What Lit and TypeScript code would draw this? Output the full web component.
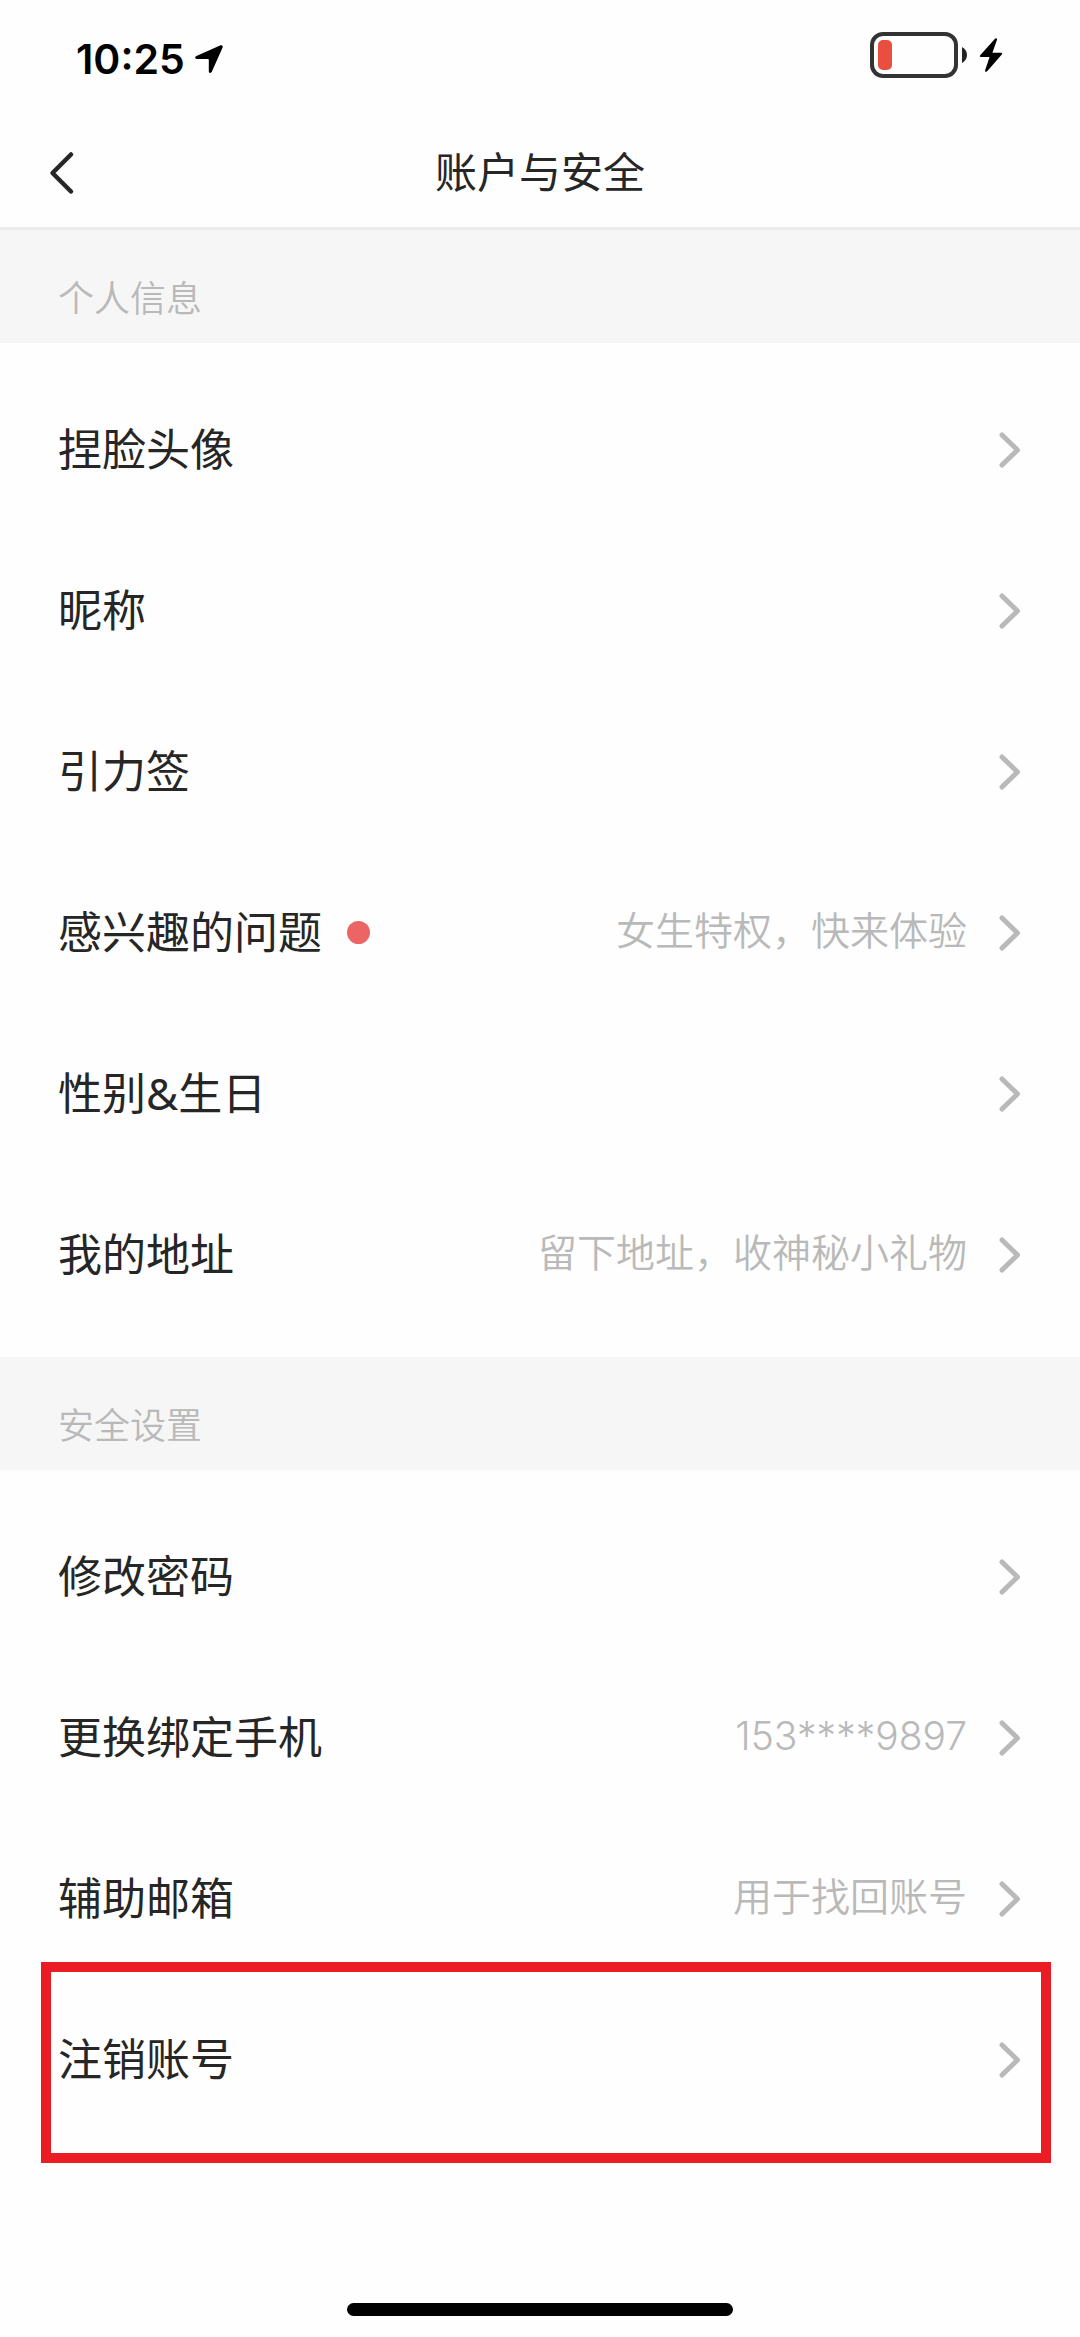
import { LitElement, html, css, nothing } from "lit";
import { customElement, property } from "lit/decorators.js";

interface Item {
  label: string;
  detail?: string;
  dot?: boolean;
  marked?: boolean;
}

interface Section {
  title: string;
  items: Item[];
}

const sections: Section[] = [
  {
    title: "个人信息",
    items: [
      { label: "捏脸头像" },
      { label: "昵称" },
      { label: "引力签" },
      { label: "感兴趣的问题", detail: "女生特权，快来体验", dot: true },
      { label: "性别&生日" },
      { label: "我的地址", detail: "留下地址，收神秘小礼物" },
    ],
  },
  {
    title: "安全设置",
    items: [
      { label: "修改密码" },
      { label: "更换绑定手机", detail: "153****9897" },
      { label: "辅助邮箱", detail: "用于找回账号" },
      { label: "注销账号", marked: true },
    ],
  },
];

@customElement("status-bar")
export class StatusBar extends LitElement {
  static styles = css`
    :host {
      display: flex;
      align-items: center;
      justify-content: space-between;
      height: 117px;
      padding: 0 76px;
      box-sizing: border-box;
      color: #000;
    }
    .clock {
      display: flex;
      align-items: center;
      gap: 10px;
      font-size: 41px;
      font-weight: 600;
      line-height: 48px;
    }
    .power {
      display: flex;
      align-items: center;
      padding-bottom: 8px;
    }
    svg {
      display: block;
    }
  `;

  render() {
    return html`
      <div class="clock">
        <span>10:25</span>
        <svg width="28" height="28" viewBox="0 0 28 28" aria-hidden="true">
          <path
            d="M25.6 .3 1.4 10.9C-.4 11.7-.2 14 1.8 14H13c.5 0 .8.3.8.8v11.4c0 2 2.2 2.4 3 .6L27.6 2.6C28.2 1.1 27 -.2 25.6.3Z"
          />
        </svg>
      </div>
      <div class="power">
        <svg width="134" height="46" viewBox="0 0 134 46" aria-hidden="true">
          <rect x="2" y="2" width="84" height="42" rx="11" fill="none" stroke="#333" stroke-width="4" />
          <rect x="8" y="8" width="14" height="30" rx="5" fill="#e94e40" />
          <path d="M92 15c3 1.500 5 4.500 5 8s-2 6.500-5 8Z" fill="#222" />
          <path
            d="M125 6.800 110.200 23.300c-.7.900-.3 1.700.8 1.700h8.600l-4.500 13.200c-.4 1.500 1.100 2.100 2.100 1.100L131.800 22.400c.8-.9.300-1.700-.8-1.700h-8.600l4.600-13c.3-1.400-1.100-2-2-.9Z"
          />
        </svg>
      </div>
    `;
  }
}

@customElement("setting-row")
export class SettingRow extends LitElement {
  @property({ attribute: false }) item!: Item;

  static styles = css`
    :host {
      display: block;
      position: relative;
    }
    .row {
      display: flex;
      align-items: center;
      width: 100%;
      height: 161px;
      padding: 0 58px;
      border: 0;
      background: none;
      font: inherit;
      color: #262626;
      text-align: left;
      box-sizing: border-box;
      cursor: pointer;
    }
    .label {
      padding-bottom: 2px;
      font-family: "Noto Sans", "Noto Sans CJK SC", sans-serif;
      font-size: 44px;
      font-weight: 400;
      line-height: 60px;
    }
    .dot {
      width: 23px;
      height: 23px;
      margin-left: 25px;
      border-radius: 50%;
      background: #ec6564;
    }
    .detail {
      margin-left: auto;
      padding-bottom: 4px;
      font-size: 39px;
      font-weight: 350;
      line-height: 60px;
      color: #b9b9b9;
    }
    .arrow {
      display: block;
      flex: none;
      margin-left: auto;
    }
    .detail + .arrow {
      margin-left: 31px;
    }
    .mark {
      position: absolute;
      inset: -17px 29px -23px 41px;
      border: 10px solid #ec1c24;
      pointer-events: none;
    }
  `;

  render() {
    const { label, detail, dot, marked } = this.item;
    return html`
      <button class="row" type="button">
        <span class="label">${label}</span>
        ${dot ? html`<span class="dot"></span>` : nothing}
        ${detail ? html`<span class="detail">${detail}</span>` : nothing}
        <svg class="arrow" width="24" height="36" viewBox="0 0 24 36" aria-hidden="true">
          <path
            d="M4 3 19.500 18 4 33"
            fill="none"
            stroke="#b9b9b9"
            stroke-width="5"
            stroke-linecap="round"
            stroke-linejoin="round"
          />
        </svg>
      </button>
      ${marked ? html`<div class="mark"></div>` : nothing}
    `;
  }
}

@customElement("app-root")
export class AppRoot extends LitElement {
  static styles = css`
    :host {
      display: flex;
      flex-direction: column;
      min-height: 100vh;
      background: #fefefe;
      font-family: Inter, "Noto Sans CJK SC", sans-serif;
    }
    .nav {
      display: grid;
      grid-template-columns: 96px 1fr 96px;
      align-items: center;
      height: 113px;
      padding-top: 1px;
      border-bottom: 3px solid #ececec;
      box-sizing: border-box;
    }
    .back {
      display: flex;
      align-items: center;
      height: 96px;
      padding: 0 0 0 48px;
      border: 0;
      background: none;
      cursor: pointer;
    }
    .title {
      margin: 0;
      font-size: 42px;
      font-weight: 400;
      line-height: 60px;
      text-align: center;
      color: #262626;
    }
    .heading {
      margin: 0;
      padding: 45px 58px 20px;
      background: #f6f6f6;
      font-size: 36px;
      font-weight: 350;
      line-height: 48px;
      color: #b9b9b9;
    }
    .list {
      margin: 0;
      padding: 26px 0 22px;
      list-style: none;
    }
    .home {
      width: 386px;
      height: 13px;
      margin: auto auto 21px;
      border-radius: 7px;
      background: #000;
    }
  `;

  render() {
    return html`
      <status-bar></status-bar>
      <header class="nav">
        <button class="back" type="button" aria-label="返回">
          <svg width="28" height="44" viewBox="0 0 28 44" aria-hidden="true">
            <path
              d="M23 3.500 4.500 22 23 40.500"
              fill="none"
              stroke="#262626"
              stroke-width="4.500"
              stroke-linecap="round"
              stroke-linejoin="round"
            />
          </svg>
        </button>
        <h1 class="title">账户与安全</h1>
      </header>
      <main>
        ${sections.map(
          (section) => html`
            <section>
              <h2 class="heading">${section.title}</h2>
              <ul class="list">
                ${section.items.map(
                  (item) => html`<li><setting-row .item=${item}></setting-row></li>`
                )}
              </ul>
            </section>
          `
        )}
      </main>
      <div class="home"></div>
    `;
  }
}
